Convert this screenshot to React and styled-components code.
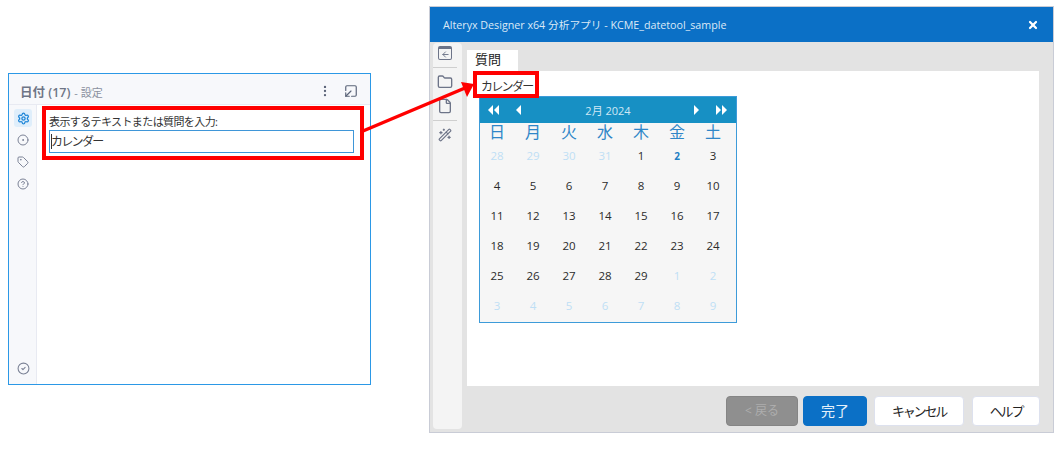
import React from "react";
import styled, { createGlobalStyle } from "styled-components";
import {
  Settings,
  CircleDot,
  Tag,
  CircleHelp,
  CircleCheck,
  EllipsisVertical,
  SquareArrowOutDownLeft,
  Folder,
  File,
  WandSparkles,
  ArrowLeft,
  X,
} from "lucide-react";

const JP = `"Open Sans", "Noto Sans CJK JP", sans-serif`;

const GlobalStyle = createGlobalStyle`
  html, body {
    margin: 0;
    background: #fff;
    font-family: ${JP};
  }
`;

function Triangle({ left, double }) {
  const shapes = left
    ? ["M5 0 L5 10 L0 5 Z", "M11 0 L11 10 L6 5 Z"]
    : ["M0 0 L5 5 L0 10 Z", "M6 0 L11 5 L6 10 Z"];
  return (
    <svg width={double ? 12 : 6} height="10" viewBox={double ? "0 0 12 10" : "0 0 6 10"}>
      <path d={shapes[0]} fill="#fff" />
      {double && <path d={shapes[1]} fill="#fff" />}
    </svg>
  );
}

const weekdays = ["日", "月", "火", "水", "木", "金", "土"];
const days = [
  [28, 1], [29, 1], [30, 1], [31, 1], [1], [2, 2], [3],
  [4], [5], [6], [7], [8], [9], [10],
  [11], [12], [13], [14], [15], [16], [17],
  [18], [19], [20], [21], [22], [23], [24],
  [25], [26], [27], [28], [29], [1, 1], [2, 1],
  [3, 1], [4, 1], [5, 1], [6, 1], [7, 1], [8, 1], [9, 1],
];

export default function App() {
  return (
    <Page>
      <GlobalStyle />
      <ConfigPanel>
        <PanelHeader>
          <PanelTitle>
            <b>日付 (17)</b> <span>- 設定</span>
          </PanelTitle>
          <EllipsisVertical size={14} color="#5b6478" />
          <SquareArrowOutDownLeft size={14} color="#5b6478" />
        </PanelHeader>
        <PanelBody>
          <SideRail>
            <RailIcon $active>
              <Settings size={13} color="#1f86d8" strokeWidth={2.4} />
            </RailIcon>
            <RailIcon>
              <CircleDot size={12} />
            </RailIcon>
            <RailIcon>
              <Tag size={12} />
            </RailIcon>
            <RailIcon>
              <CircleHelp size={12} />
            </RailIcon>
            <RailSpacer />
            <RailIcon>
              <CircleCheck size={13} />
            </RailIcon>
          </SideRail>
          <PanelContent>
            <FieldLabel>表示するテキストまたは質問を入力:</FieldLabel>
            <FieldInput>
              <Caret />
              カレンダー
            </FieldInput>
          </PanelContent>
        </PanelBody>
      </ConfigPanel>

      <Dialog>
        <TitleBar>
          <span>Alteryx Designer x64 分析アプリ - KCME_datetool_sample</span>
          <X size={12} color="#fff" strokeWidth={4.5} />
        </TitleBar>
        <DialogBody>
          <ToolRail>
            <ToolIcon>
              <BackBox>
                <ArrowLeft size={9} strokeWidth={2.5} />
              </BackBox>
            </ToolIcon>
            <ToolDivider />
            <ToolIcon>
              <Folder size={16} />
            </ToolIcon>
            <ToolIcon>
              <File size={16} />
            </ToolIcon>
            <ToolDivider />
            <ToolIcon>
              <WandSparkles size={14} />
            </ToolIcon>
          </ToolRail>
          <Main>
            <Tab>質問</Tab>
            <Sheet>
              <QuestionLabel>カレンダー</QuestionLabel>
              <Calendar>
                <CalendarHead>
                  <NavGroup>
                    <Triangle left double />
                    <Triangle left />
                  </NavGroup>
                  <MonthLabel>2月 2024</MonthLabel>
                  <NavGroup>
                    <Triangle />
                    <Triangle double />
                  </NavGroup>
                </CalendarHead>
                <CalendarGrid>
                  {weekdays.map((d) => (
                    <Weekday key={d}>{d}</Weekday>
                  ))}
                  {days.map(([n, kind], i) => (
                    <Day key={i} $kind={kind}>
                      {n}
                    </Day>
                  ))}
                </CalendarGrid>
              </Calendar>
            </Sheet>
            <ButtonRow>
              <ActionButton $variant="disabled" $width={72}>
                &lt; 戻る
              </ActionButton>
              <ActionButton $variant="primary" $width={64} $gap={5}>
                完了
              </ActionButton>
              <ActionButton $variant="kana" $width={90} $gap={7}>
                キャンセル
              </ActionButton>
              <ActionButton $variant="kana" $width={68} $gap={8}>
                ヘルプ
              </ActionButton>
            </ButtonRow>
          </Main>
        </DialogBody>
      </Dialog>

      <Highlight $left={42} $top={106} $width={322} $height={54} />
      <Highlight $left={473} $top={71} $width={66} $height={27} />
      <Arrow width="130" height="70" viewBox="0 0 130 70">
        <line x1="3" y1="59" x2="105" y2="16" stroke="#f00" strokeWidth="3.5" />
        <path d="M114 12 L101 10 L107 25 Z" fill="#f00" />
      </Arrow>
    </Page>
  );
}

const Page = styled.div`
  position: relative;
  width: 1058px;
  height: 455px;
  overflow: hidden;
  display: flex;
  align-items: flex-start;
  background: #fff;
`;

const ConfigPanel = styled.div`
  width: 363px;
  height: 312px;
  margin: 73px 0 0 8px;
  box-sizing: border-box;
  border: 1px solid #2b98e6;
  background: #fff;
  display: flex;
  flex-direction: column;
`;

const PanelHeader = styled.div`
  height: 31px;
  flex: none;
  box-sizing: border-box;
  padding: 3px 12px 0 11px;
  display: flex;
  align-items: center;
  gap: 12px;
  background: #f7f8fb;
  border-bottom: 1px solid #e8eaf2;
`;

const PanelTitle = styled.div`
  flex: 1;
  padding-top: 2px;
  font-size: 11px;
  color: #6e7586;
  b {
    font-weight: 600;
    font-size: 12.5px;
  }
  span {
    margin-left: 1px;
    color: #8a90a0;
  }
`;

const PanelBody = styled.div`
  flex: 1;
  display: flex;
  min-height: 0;
`;

const SideRail = styled.div`
  width: 28px;
  flex: none;
  box-sizing: border-box;
  padding: 4px 0 7px 1px;
  background: #f7f8fb;
  border-right: 1px solid #e8eaf2;
  display: flex;
  flex-direction: column;
  align-items: center;
  gap: 4px;
`;

const RailIcon = styled.div`
  width: 18px;
  height: 18px;
  display: flex;
  align-items: center;
  justify-content: center;
  border-radius: 3px;
  color: #7b8296;
  background: ${(p) => (p.$active ? "#dfeefb" : "transparent")};
`;

const RailSpacer = styled.div`
  flex: 1;
`;

const PanelContent = styled.div`
  flex: 1;
  padding: 9px 16px 0 12px;
`;

const FieldLabel = styled.div`
  font-size: 11px;
  letter-spacing: -0.6px;
  line-height: 15px;
  color: #333;
`;

const FieldInput = styled.div`
  height: 23px;
  box-sizing: border-box;
  margin-top: 1px;
  padding-left: 1px;
  border: 1px solid #3f96d8;
  font-size: 12px;
  letter-spacing: -1.7px;
  line-height: 21px;
  color: #333;
  display: flex;
  align-items: center;
`;

const Caret = styled.span`
  width: 1px;
  height: 15px;
  margin-right: -1px;
  background: #333;
`;

const Dialog = styled.div`
  width: 625px;
  height: 427px;
  margin: 6px 0 0 58px;
  box-sizing: border-box;
  border: 1px solid #c9ccd6;
  background: #e3e3e3;
  display: flex;
  flex-direction: column;
`;

const TitleBar = styled.div`
  height: 35px;
  flex: none;
  box-sizing: border-box;
  padding: 0 14px 0 13px;
  display: flex;
  align-items: center;
  justify-content: space-between;
  background: #0b70c6;
  color: #dbe9f6;
  font-size: 10.7px;
`;

const DialogBody = styled.div`
  flex: 1;
  display: flex;
  min-height: 0;
`;

const ToolRail = styled.div`
  width: 29px;
  flex: none;
  margin: 1px 0 3px 3px;
  border-radius: 4px;
  background: #f4f4f4;
  display: flex;
  flex-direction: column;
  align-items: flex-start;
  color: #6d7488;
`;

const ToolIcon = styled.div`
  width: 24px;
  height: 20px;
  margin-bottom: 4px;
  display: flex;
  align-items: center;
  justify-content: center;
`;

const BackBox = styled.div`
  width: 14px;
  height: 14px;
  box-sizing: border-box;
  border: 1.5px solid #6d7488;
  border-top-width: 3px;
  border-radius: 2px;
  display: flex;
  align-items: center;
  justify-content: center;
`;

const ToolDivider = styled.div`
  width: 24px;
  height: 1px;
  margin-bottom: 4px;
  background: #cfcfcf;
`;

const Main = styled.div`
  flex: 1;
  min-width: 0;
  padding: 8px 13px 0 5px;
  display: flex;
  flex-direction: column;
`;

const Tab = styled.div`
  width: 51px;
  height: 21px;
  flex: none;
  box-sizing: border-box;
  padding-left: 8px;
  background: #fff;
  font-size: 13px;
  line-height: 18px;
  color: #222;
`;

const Sheet = styled.div`
  height: 315px;
  flex: none;
  margin-right: 1px;
  box-sizing: border-box;
  padding: 6px 0 0 12px;
  background: #fff;
`;

const QuestionLabel = styled.div`
  height: 19px;
  padding-left: 2px;
  font-size: 12px;
  letter-spacing: -1.7px;
  line-height: 20px;
  color: #333;
`;

const Calendar = styled.div`
  width: 258px;
  height: 227px;
  box-sizing: border-box;
  border: 1px solid #3d9bd9;
  background: #f6f6f6;
`;

const CalendarHead = styled.div`
  height: 26px;
  box-sizing: border-box;
  padding: 0 8px;
  display: flex;
  align-items: center;
  justify-content: space-between;
  background: #1790c4;
`;

const NavGroup = styled.div`
  width: 34px;
  display: flex;
  align-items: center;
  justify-content: space-between;
`;

const MonthLabel = styled.div`
  font-size: 11px;
  color: #cfe8f5;
`;

const CalendarGrid = styled.div`
  margin-left: -1px;
  display: grid;
  grid-template-columns: repeat(7, 36px);
  grid-template-rows: 18px repeat(6, 30px);
`;

const Weekday = styled.div`
  font-size: 16px;
  line-height: 18px;
  text-align: center;
  color: #2f86c8;
`;

const dayColors = { 1: "#bfdff5", 2: "#1f7fc4" };

const Day = styled.div`
  font-size: ${(p) => (p.$kind === 2 ? "10px" : "11.5px")};
  font-weight: ${(p) => (p.$kind === 2 ? 700 : 400)};
  line-height: 30px;
  text-align: center;
  color: ${(p) => dayColors[p.$kind] || "#2b2b2b"};
`;

const ButtonRow = styled.div`
  flex: 1;
  display: flex;
  justify-content: flex-end;
  align-items: flex-start;
  padding-top: 10px;
`;

const buttonVariants = {
  primary: "background: #0b70c6; color: #e4f0fa; border-color: #0b70c6; font-size: 14px;",
  disabled: "background: #8f8f8f; color: #adadad; border-color: #858585;",
  kana: "font-size: 13px; letter-spacing: -2.2px;",
};

const ActionButton = styled.div`
  width: ${(p) => p.$width}px;
  height: 30px;
  margin-left: ${(p) => p.$gap || 4}px;
  box-sizing: border-box;
  border: 1px solid #dde1ee;
  border-radius: 4px;
  background: #fff;
  color: #222;
  font-size: 12px;
  line-height: 28px;
  text-align: center;
  ${(p) => buttonVariants[p.$variant] || ""}
`;

const Highlight = styled.div`
  position: absolute;
  left: ${(p) => p.$left}px;
  top: ${(p) => p.$top}px;
  width: ${(p) => p.$width}px;
  height: ${(p) => p.$height}px;
  box-sizing: border-box;
  border: 4px solid #f00;
`;

const Arrow = styled.svg`
  position: absolute;
  left: 360px;
  top: 72px;
`;
